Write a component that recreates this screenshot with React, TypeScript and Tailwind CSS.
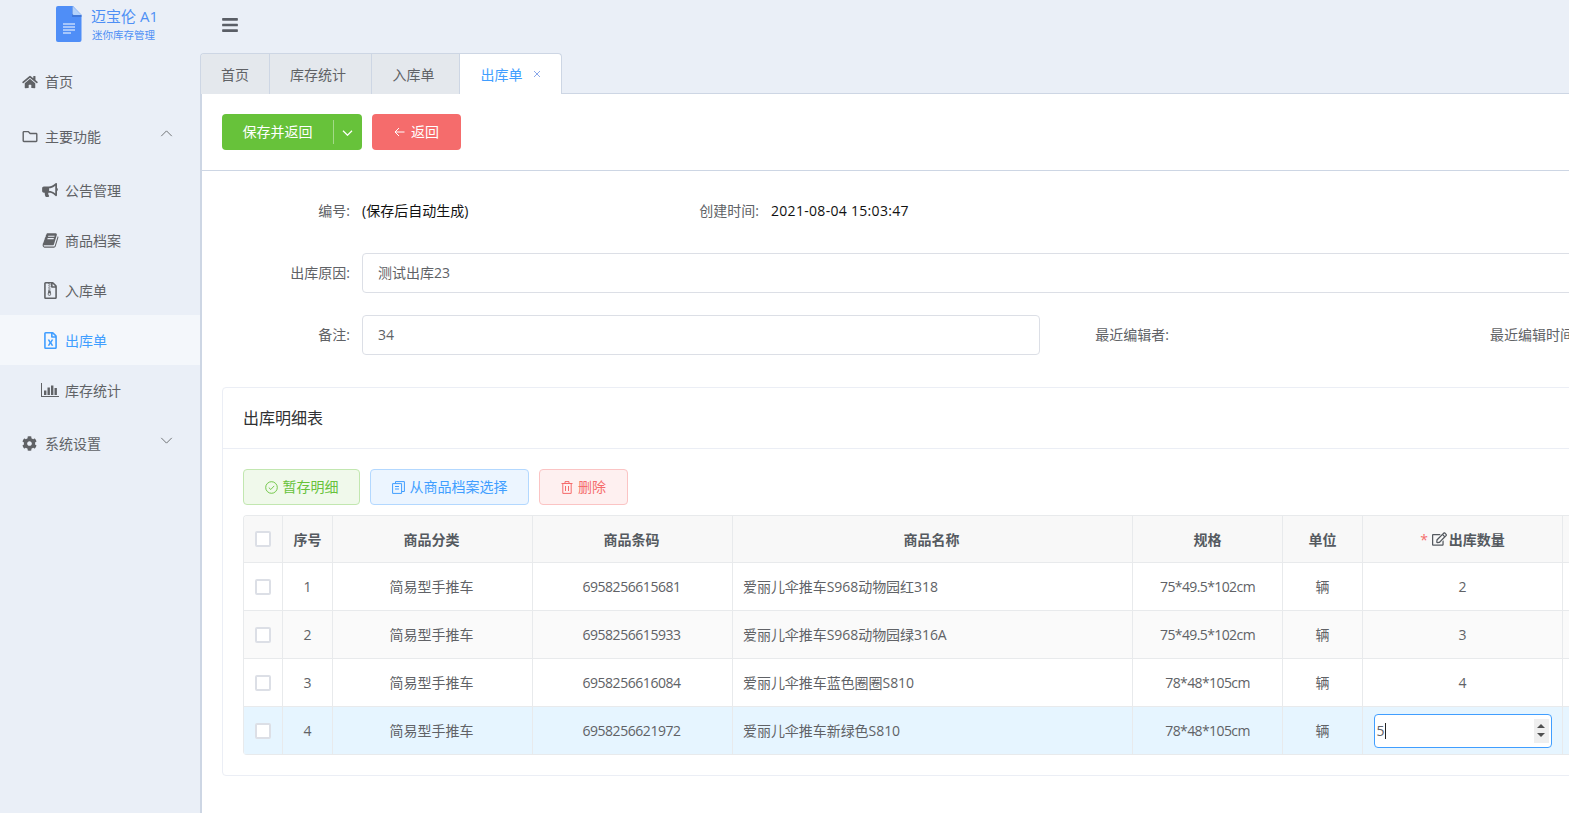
import React from "react";
import { FaHome, FaRegFolder, FaBullhorn, FaRegFileArchive, FaRegFileExcel, FaCog, FaBars, FaRegEdit } from "react-icons/fa";

const font = { fontFamily: '"Open Sans","Noto Sans CJK SC",sans-serif' };

function Chevron({ up, className, sw = 1 }: { up?: boolean; className?: string; sw?: number }) {
  return (
    <svg viewBox="0 0 14 8" className={className} fill="none" stroke="currentColor" strokeWidth={sw}>
      <path d={up ? "M1 7L7 1L13 7" : "M1 1L7 7L13 1"} />
    </svg>
  );
}

function BookIcon({ className }: { className?: string }) {
  return (
    <svg viewBox="0 0 1792 1792" className={className} fill="currentColor">
      <path d="M1703 478q40 57 18 129l-275 906q-19 64-76.5 107.5t-122.5 43.5h-923q-77 0-148.5-53.5t-99.5-131.5q-24-67-2-127 0-4 3-27t4-37q1-8-3-21.5t-3-19.5q2-11 8-21t16.5-23.5 16.5-23.5q23-38 45-91.5t30-91.5q3-10 .5-30t-.5-28q3-11 17-28t17-23q21-36 42-92t25-90q1-9-2.5-32t.5-28q4-13 22-30.5t22-22.5q19-26 42.5-84.5t27.5-96.5q1-8-3-25.5t-2-26.5q2-8 9-18t18-23 17-21q8-12 16.5-30.5t15-35 16-36 19.5-32 26.5-23.5 36-11.5 47.5 5.5l-1 3q38-9 51-9h761q74 0 114 56t18 130l-274 906q-36 119-71.5 153.5t-128.5 34.5h-869q-27 0-38 15-11 16-1 43 24 70 144 70h923q29 0 56-15.5t35-41.5l300-987q7-22 5-57 38 15 59 43zm-1064 2q-4 13 2 22.5t20 9.5h608q13 0 25.5-9.5t16.5-22.5l21-64q4-13-2-22.5t-20-9.5h-608q-13 0-25.5 9.5t-16.5 22.5zm-83 256q-4 13 2 22.5t20 9.5h608q13 0 25.5-9.5t16.5-22.5l21-64q4-13-2-22.5t-20-9.5h-608q-13 0-25.5 9.5t-16.5 22.5z" />
    </svg>
  );
}

function ChartIcon({ className }: { className?: string }) {
  return (
    <svg viewBox="0 0 18 14" className={className} fill="currentColor">
      <path d="M0 0H1V13H18V14H0Z" />
      <path d="M3 7.5H5.4V12H3ZM6.5 4.5H8.9V12H6.5ZM10 2.5H12.4V12H10ZM13.5 5H15.9V12H13.5Z" />
    </svg>
  );
}

function SubItem({ icon, label, active }: { icon: React.ReactNode; label: string; active?: boolean }) {
  return (
    <div className={`h-[50px] flex items-center pl-[40px] text-[14px] ${active ? "bg-[#f4f7fb] text-[#409eff]" : "text-[#606266]"}`}>
      <span className="w-[20px] h-[20px] mr-[5px] flex items-center justify-center">{icon}</span>
      {label}
    </div>
  );
}

function Sidebar() {
  return (
    <aside className="w-[200px] shrink-0 h-[813px] flex flex-col">
      <div className="h-[56px] flex items-start pl-[56px] pt-[6px]">
        <svg width="26" height="36" viewBox="0 0 26 36" className="shrink-0">
          <path d="M2 0H17L25.5 9V34a2 2 0 0 1-2 2H2a2 2 0 0 1-2-2V2a2 2 0 0 1 2-2Z" fill="#4f8ef7" />
          <path d="M16 0L25.5 9V11H16Z" fill="#3a6fd0" opacity="0.75" />
          <path d="M16.5 0L25.5 9H18a1.5 1.5 0 0 1-1.5-1.5Z" fill="#b4d2fa" />
          <path d="M7 18H19M7 21H19M7 24H19M7 27H15" stroke="#fff" strokeWidth="1" />
        </svg>
        <div className="ml-[9px] text-[#4e8ff5]">
          <div className="text-[15px] leading-[20px]">迈宝伦 A1</div>
          <div className="text-[10.5px] leading-[14px] mt-[2px] ml-[1px]">迷你库存管理</div>
        </div>
      </div>
      <div className="h-[51px] flex items-center pl-[22px] text-[14px] text-[#606266]">
        <FaHome className="w-[16px] h-[14px] mr-[7px]" />首页
      </div>
      <div className="h-[58px] flex items-center pl-[22px] pr-[27px] text-[14px] text-[#606266]">
        <FaRegFolder className="w-[16px] h-[15px] mr-[7px]" />
        <span className="flex-1">主要功能</span>
        <Chevron up className="w-[13px] h-[7px] -mt-[6px]" />
      </div>
      <SubItem icon={<FaBullhorn className="w-[16px] h-[14px]" />} label="公告管理" />
      <SubItem icon={<BookIcon className="w-[17px] h-[17px]" />} label="商品档案" />
      <SubItem icon={<FaRegFileArchive className="w-[15px] h-[17px]" />} label="入库单" />
      <SubItem active icon={<FaRegFileExcel className="w-[15px] h-[17px]" />} label="出库单" />
      <SubItem icon={<ChartIcon className="w-[18px] h-[14px] shrink-0" />} label="库存统计" />
      <div className="h-[56px] flex items-center pl-[22px] pr-[27px] text-[14px] text-[#606266]">
        <FaCog className="w-[15px] h-[15px] mr-[8px]" />
        <span className="flex-1">系统设置</span>
        <Chevron className="w-[13px] h-[7px] -mt-[6px]" />
      </div>
    </aside>
  );
}

function Tabs() {
  const cell = "h-[40px] flex items-center justify-center bg-[#e4e8ed] border-r border-[#cdd6e4] text-[14px] text-[#606266]";
  return (
    <div className="h-[41px] flex items-end border-b border-[#cdd6e4] shrink-0">
      <div className="flex -mb-px border-l border-t border-[#cdd6e4] rounded-tl-[4px] overflow-hidden h-[41px]">
        <div className={`${cell} w-[69px]`}>首页</div>
        <div className={`${cell} w-[102px] pr-[5px]`}>库存统计</div>
        <div className={`${cell} w-[88px] pr-[4px]`}>入库单</div>
      </div>
      <div className="h-[41px] -mb-px w-[102px] bg-white border-t border-r border-[#cdd6e4] rounded-tr-[4px] flex items-center justify-center text-[14px] text-[#409eff] gap-[10px]">
        出库单
        <svg width="8" height="8" viewBox="0 0 8 8" stroke="#7d9ee8" strokeWidth="0.9"><path d="M1 1L7 7M7 1L1 7" /></svg>
      </div>
    </div>
  );
}

function Toolbar() {
  return (
    <div className="h-[77px] border-b border-[#cdd6e4] flex items-start pt-[20px] pl-[20px] gap-[10px] bg-white">
      <div className="w-[140px] h-[36px] bg-[#67c23a] rounded-[4px] text-white text-[14px] flex items-center">
        <span className="w-[111px] text-center pb-[2px]">保存并返回</span>
        <span className="w-px h-[24px] bg-[#a3da88]" />
        <Chevron sw={1.6} className="w-[11px] h-[6px] ml-[8px] mt-[1px]" />
      </div>
      <div className="w-[89px] h-[36px] bg-[#f56c6c] rounded-[4px] text-white text-[14px] flex items-center justify-center gap-[6px]">
        <svg width="11" height="10" viewBox="0 0 11 10" fill="none" stroke="currentColor" strokeWidth="1"><path d="M10.5 5H1M5 1L1 5L5 9" /></svg>
        <span className="pb-[2px]">返回</span>
      </div>
    </div>
  );
}

function Label({ className, children }: { className: string; children: React.ReactNode }) {
  return <span className={`text-[14px] text-[#606266] text-right shrink-0 whitespace-nowrap pb-[2px] ${className}`}>{children}</span>;
}

function Form() {
  return (
    <div className="pt-[20px]">
      <div className="h-[40px] flex items-center">
        <Label className="w-[148px]">编号:</Label>
        <span className="ml-[12px] w-[310px] shrink-0 text-[14px] text-[#111] pb-[2px]">(保存后自动生成)</span>
        <Label className="w-[87px]">创建时间:</Label>
        <span className="ml-[12px] text-[14px] text-[#111] tracking-[0.3px] pb-[2px]">2021-08-04 15:03:47</span>
      </div>
      <div className="h-[40px] mt-[22px] flex items-center">
        <Label className="w-[148px]">出库原因:</Label>
        <div className="ml-[12px] w-[1400px] shrink-0 h-[40px] border border-[#dcdfe6] rounded-[4px] flex items-center pl-[15px] pb-[2px] text-[14px] text-[#606266]">测试出库23</div>
      </div>
      <div className="h-[40px] mt-[22px] flex items-center overflow-hidden">
        <Label className="w-[148px]">备注:</Label>
        <div className="ml-[12px] w-[678px] shrink-0 h-[40px] border border-[#dcdfe6] rounded-[4px] flex items-center pl-[15px] pb-[2px] text-[14px] text-[#606266]">34</div>
        <Label className="w-[129px]">最近编辑者:</Label>
        <Label className="ml-[321px] w-[90px] !text-left">最近编辑时间:</Label>
      </div>
    </div>
  );
}

const cols = ["w-[39px]", "w-[50px]", "w-[200px]", "w-[200px]", "w-[400px]", "w-[150px]", "w-[80px]", "w-[200px]", "w-[200px]"];

function Check() {
  return <span className="block w-[16px] h-[16px] bg-white border-2 border-[#dcdfe6] rounded-[2px]" />;
}

function Row({ n, cat, code, name, spec, qty, striped, current }: { n: number; cat: string; code: string; name: string; spec: string; qty: number; striped?: boolean; current?: boolean }) {
  const bg = current ? "bg-[#e6f5ff]" : striped ? "bg-[#fafafa]" : "bg-white";
  const c = "h-full shrink-0 flex items-center justify-center border-r border-[#e8eaec]";
  return (
    <div className={`h-[48px] flex border-b border-[#e8eaec] text-[14px] text-[#606266] ${bg}`}>
      <div className={`${c} ${cols[0]}`}><Check /></div>
      <div className={`${c} ${cols[1]}`}>{n}</div>
      <div className={`${c} ${cols[2]} pr-[2px]`}>{cat}</div>
      <div className={`${c} ${cols[3]} tracking-[-0.45px] pr-[2px]`}>{code}</div>
      <div className={`${c} ${cols[4]} !justify-start pl-[10px] tracking-[-0.05px]`}>{name}</div>
      <div className={`${c} ${cols[5]} tracking-[-0.6px]`}>{spec}</div>
      <div className={`${c} ${cols[6]}`}>辆</div>
      <div className={`${c} ${cols[7]}`}>
        {current ? (
          <div className="w-[178px] h-[34px] bg-white border border-[#409eff] rounded-[4px] flex items-center pl-[2px] pr-[2px]">
            <span>5</span>
            <span className="w-px h-[16px] bg-[#222]" />
            <span className="ml-auto w-[15px] h-[24px] bg-[#efefef] flex flex-col items-center justify-center gap-[5px]">
              <span className="w-0 h-0 border-x-[4px] border-x-transparent border-b-[4px] border-b-[#505050]" />
              <span className="w-0 h-0 border-x-[4px] border-x-transparent border-t-[4px] border-t-[#505050]" />
            </span>
          </div>
        ) : qty}
      </div>
      <div className={`${c} ${cols[8]}`} />
    </div>
  );
}

function DetailCard() {
  const th = "h-full shrink-0 flex items-center justify-center border-r border-[#e8eaec]";
  return (
    <div className="mt-[32px] ml-[20px] w-[1400px] h-[389px] border border-[#ebeef5] rounded-[4px] bg-white">
      <div className="h-[61px] border-b border-[#ebeef5] flex items-center pl-[20px] text-[16px] text-[#303133]">出库明细表</div>
      <div className="pt-[20px] pl-[20px]">
        <div className="flex gap-[10px] text-[14px]">
          <div className="w-[117px] h-[36px] flex items-center justify-center gap-[5px] rounded-[4px] border border-[#c2e7b0] bg-[#f0f9eb] text-[#67c23a]">
            <svg width="13" height="13" viewBox="0 0 13 13" fill="none" stroke="currentColor" strokeWidth="0.9"><circle cx="6.5" cy="6.5" r="5.8" /><path d="M3.8 6.6L5.8 8.5L9.2 4.9" /></svg>
            <span className="pb-[2px]">暂存明细</span>
          </div>
          <div className="w-[159px] h-[36px] flex items-center justify-center gap-[5px] rounded-[4px] border border-[#b3d8ff] bg-[#ecf5ff] text-[#409eff]">
            <svg width="13" height="13" viewBox="0 0 13 13" fill="none" stroke="currentColor" strokeWidth="1"><path d="M3.5 2.5V.6H12.4V10.5H10M.6 2.6H9.6V12.4H.6ZM3 5.5H7M3 8H7" /></svg>
            <span className="pb-[2px]">从商品档案选择</span>
          </div>
          <div className="w-[89px] h-[36px] flex items-center justify-center gap-[5px] rounded-[4px] border border-[#fbc4c4] bg-[#fef0f0] text-[#f56c6c]">
            <svg width="12" height="13" viewBox="0 0 12 13" fill="none" stroke="currentColor" strokeWidth="1"><path d="M.5 2.5H11.5M4 2.5V.6H8V2.5M1.8 2.5V12.4H10.2V2.5M4.5 5V10M7.5 5V10" /></svg>
            <span className="pb-[2px]">删除</span>
          </div>
        </div>
        <div className="mt-[10px] w-[1380px] border-l border-t border-[#e8eaec] rounded-[4px] overflow-hidden">
          <div className="h-[47px] flex bg-[#f8f8f8] border-b border-[#e8eaec] text-[14px] font-bold text-[#555a60]">
            <div className={`${th} ${cols[0]}`}><Check /></div>
            <div className={`${th} ${cols[1]}`}>序号</div>
            <div className={`${th} ${cols[2]} pr-[2px]`}>商品分类</div>
            <div className={`${th} ${cols[3]} pr-[2px]`}>商品条码</div>
            <div className={`${th} ${cols[4]} pr-[2px]`}>商品名称</div>
            <div className={`${th} ${cols[5]}`}>规格</div>
            <div className={`${th} ${cols[6]}`}>单位</div>
            <div className={`${th} ${cols[7]}`}>
              <span className="text-[#f56c6c] font-normal mr-[4px]">*</span>
              <FaRegEdit className="w-[15px] h-[14px] mr-[2px] font-normal" />
              出库数量
            </div>
            <div className={`${th} ${cols[8]}`} />
          </div>
          <Row n={1} cat="简易型手推车" code="6958256615681" name="爱丽儿伞推车S968动物园红318" spec="75*49.5*102cm" qty={2} />
          <Row n={2} striped cat="简易型手推车" code="6958256615933" name="爱丽儿伞推车S968动物园绿316A" spec="75*49.5*102cm" qty={3} />
          <Row n={3} cat="简易型手推车" code="6958256616084" name="爱丽儿伞推车蓝色圈圈S810" spec="78*48*105cm" qty={4} />
          <Row n={4} current cat="简易型手推车" code="6958256621972" name="爱丽儿伞推车新绿色S810" spec="78*48*105cm" qty={5} />
        </div>
      </div>
    </div>
  );
}

export default function App() {
  return (
    <div className="w-[1569px] h-[813px] overflow-hidden flex bg-[#eaeff7]" style={font}>
      <Sidebar />
      <main className="flex-1 min-w-0 flex flex-col">
        <div className="h-[53px] flex items-center pl-[21px] text-[#5a5e66] shrink-0">
          <FaBars className="w-[18px] h-[18px] -mt-[4px]" />
        </div>
        <Tabs />
        <div className="flex-1 bg-white overflow-hidden border-l-2 border-[#cdd6e4]">
          <Toolbar />
          <Form />
          <DetailCard />
        </div>
      </main>
    </div>
  );
}
